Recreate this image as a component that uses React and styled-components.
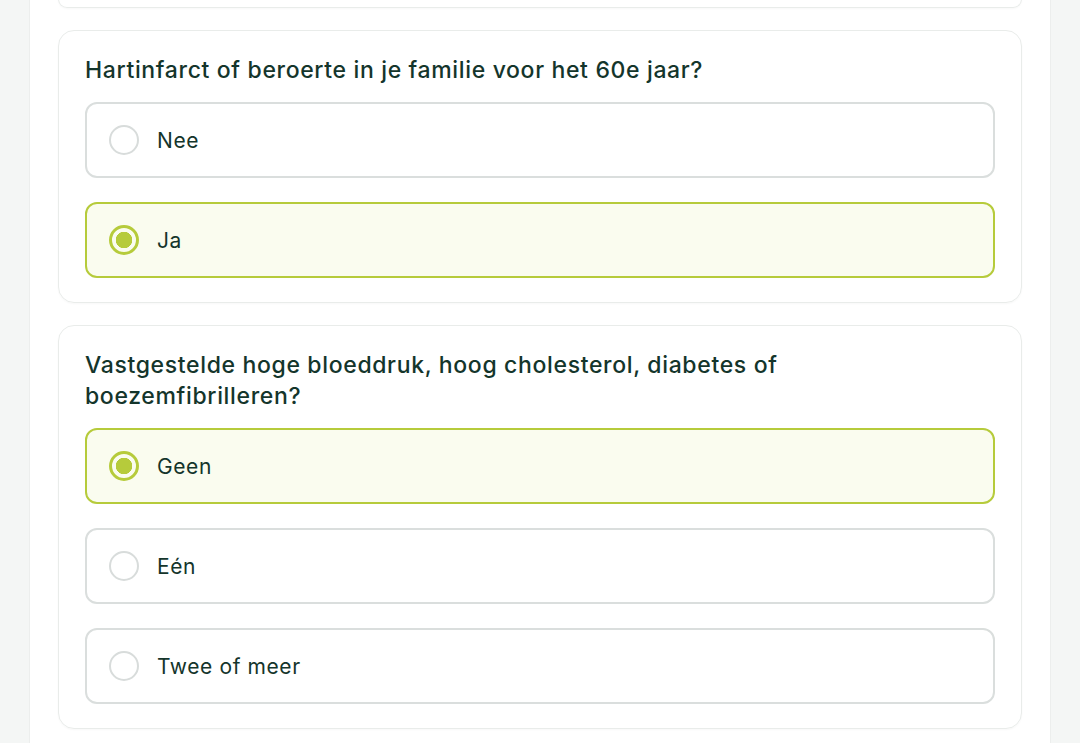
import styled, { createGlobalStyle } from "styled-components";

const GlobalStyle = createGlobalStyle`
  html, body {
    margin: 0;
    padding: 0;
    background: #f4f6f5;
  }
  body {
    font-family: Inter, "Open Sans", sans-serif;
    color: #14352b;
  }
`;

const questions = [
  {
    id: "family",
    title: "Hartinfarct of beroerte in je familie voor het 60e jaar?",
    options: ["Nee", "Ja"],
    selected: 1,
  },
  {
    id: "risk",
    title:
      "Vastgestelde hoge bloeddruk, hoog cholesterol, diabetes of boezemfibrilleren?",
    options: ["Geen", "Eén", "Twee of meer"],
    selected: 0,
  },
];

const App = () => {
  return (
    <>
      <GlobalStyle />
      <Page>
        <Panel>
          <CardTail />
          {questions.map((q) => (
            <Card key={q.id}>
              <Title>{q.title}</Title>
              <Options>
                {q.options.map((label, i) => (
                  <Option key={label} $active={i === q.selected}>
                    <Radio $active={i === q.selected} />
                    <Label>{label}</Label>
                  </Option>
                ))}
              </Options>
            </Card>
          ))}
        </Panel>
      </Page>
    </>
  );
};

const Page = styled.div`
  height: 743px;
  overflow: hidden;
  padding: 0 29px;
  background: #f4f6f5;
`;

const Panel = styled.main`
  background: #fff;
  border-left: 1px solid #eceeed;
  border-right: 1px solid #eceeed;
  min-height: 100%;
  padding: 0 28px 40px;
  display: flex;
  flex-direction: column;
  gap: 22px;
`;

const CardTail = styled.div`
  height: 8px;
  margin-top: -1px;
  border: 1px solid #e9ecea;
  border-top: none;
  border-radius: 0 0 16px 16px;
  box-shadow: 0 1px 2px rgba(0, 0, 0, 0.03);
`;

const Card = styled.section`
  border: 1px solid #e9ecea;
  border-radius: 16px;
  padding: 24px 26px 24px;
  box-shadow: 0 1px 2px rgba(0, 0, 0, 0.03);
`;

const Title = styled.h2`
  margin: 0 0 16px;
  max-width: 760px;
  font-size: 23px;
  line-height: 31px;
  font-weight: 500;
  letter-spacing: 0.65px;
  color: #14352b;
`;

const Options = styled.div`
  display: flex;
  flex-direction: column;
  gap: 24px;
`;

const Option = styled.label`
  display: flex;
  align-items: center;
  gap: 18px;
  height: 76px;
  box-sizing: border-box;
  padding: 0 22px;
  border: 2px solid ${(p) => (p.$active ? "#b6cb3b" : "#dadedd")};
  background: ${(p) => (p.$active ? "#fafcef" : "#fff")};
  border-radius: 12px;
  cursor: pointer;
`;

const Radio = styled.span`
  width: 30px;
  height: 30px;
  box-sizing: border-box;
  border-radius: 50%;
  flex-shrink: 0;
  border: ${(p) => (p.$active ? "3px solid #b6cb3b" : "2px solid #d8dcdb")};
  background: ${(p) =>
    p.$active
      ? "radial-gradient(circle, #b6cb3b 0 8px, transparent 8.5px)"
      : "#fff"};
`;

const Label = styled.span`
  font-size: 21px;
  letter-spacing: 0.6px;
  color: #14352b;
`;

export default App;
